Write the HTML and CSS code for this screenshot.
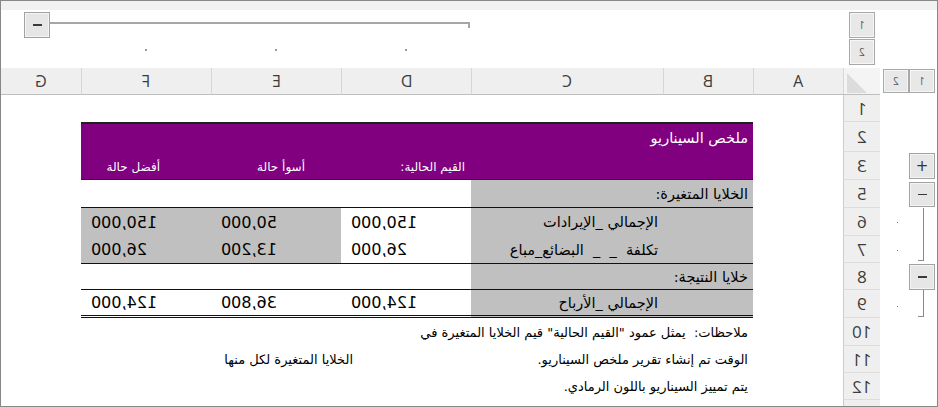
FILE: index.html
```html
<!DOCTYPE html>
<html lang="ar">
<head>
<meta charset="utf-8">
<title>ملخص السيناريو</title>
<link rel="stylesheet" href="styles.css">
</head>
<body>
<div class="frame">
  <div class="sheet">
    <div class="strip"></div>

    <!-- column outline, level A -->
    <div class="ola">
      <div class="obtn"><span class="minus"></span></div>
      <div class="hline"></div>
    </div>
    <div class="span3"></div>
    <div class="rhtop"><div class="lbtn"><span class="m">1</span></div></div>
    <div></div>

    <!-- column outline, level B -->
    <div></div>
    <div class="dotcell"><i class="cdot"></i></div>
    <div class="dotcell"><i class="cdot"></i></div>
    <div class="dotcell"><i class="cdot"></i></div>
    <div class="span3"></div>
    <div class="rhtop"><div class="lbtn l2"><span class="m">2</span></div></div>
    <div></div>

    <!-- column headers -->
    <div class="ch first"><span class="m">G</span></div>
    <div class="ch"><span class="m">F</span></div>
    <div class="ch"><span class="m">E</span></div>
    <div class="ch"><span class="m">D</span></div>
    <div class="ch"><span class="m">C</span></div>
    <div class="ch"><span class="m">B</span></div>
    <div class="ch"><span class="m">A</span></div>
    <div class="corner"><svg width="22" height="22" viewBox="0 0 22 22"><polygon points="2,2 2,22 22,22" fill="#dcdcdc"/></svg></div>
    <div class="rlevels">
      <div class="lbtn rl"><span class="m">2</span></div>
      <div class="lbtn rl"><span class="m">1</span></div>
    </div>

    <!-- row 1 -->
    <div class="span7"></div>
    <div class="rh"><span class="m">1</span></div>
    <div class="ol"></div>

    <!-- row 2 -->
    <div></div>
    <div class="purple top title">ملخص السيناريو</div>
    <div></div>
    <div class="rh"><span class="m">2</span></div>
    <div class="ol"></div>

    <!-- row 3 -->
    <div></div>
    <div class="purple ph ph-f">أفضل حالة</div>
    <div class="purple ph ph-e">أسوأ حالة</div>
    <div class="purple ph ph-d">القيم الحالية:</div>
    <div class="purple ph span2"></div>
    <div></div>
    <div class="rh"><span class="m">3</span></div>
    <div class="ol"><div class="obtn pm">+</div></div>

    <!-- row 5 -->
    <div></div>
    <div class="span3 bb"></div>
    <div class="gray span2 bb lab">الخلايا المتغيرة:</div>
    <div></div>
    <div class="rh"><span class="m">5</span></div>
    <div class="ol"><div class="obtn pm low"><span class="minus"></span></div></div>

    <!-- row 6 -->
    <div></div>
    <div class="gray num"><span class="m">150,000</span></div>
    <div class="gray num"><span class="m">50,000</span></div>
    <div class="num"><span class="m">150,000</span></div>
    <div class="gray lab">الإجمالي _الإيرادات</div>
    <div class="gray"></div>
    <div></div>
    <div class="rh"><span class="m">6</span></div>
    <div class="ol"><i class="rdot"></i><div class="vline"></div></div>

    <!-- row 7 -->
    <div></div>
    <div class="gray num"><span class="m">26,000</span></div>
    <div class="gray num"><span class="m">13,200</span></div>
    <div class="num"><span class="m">26,000</span></div>
    <div class="gray lab">تكلفة &nbsp;_ &nbsp;_ &nbsp;البضائع_مباع</div>
    <div class="gray"></div>
    <div></div>
    <div class="rh"><span class="m">7</span></div>
    <div class="ol"><i class="rdot"></i><div class="vend"></div></div>

    <!-- row 8 -->
    <div></div>
    <div class="span3 bt bb"></div>
    <div class="gray span2 bt bb lab">خلايا النتيجة:</div>
    <div></div>
    <div class="rh"><span class="m">8</span></div>
    <div class="ol"><div class="obtn pm"><span class="minus"></span></div></div>

    <!-- row 9 -->
    <div></div>
    <div class="num dbl"><span class="m">124,000</span></div>
    <div class="num dbl"><span class="m">36,800</span></div>
    <div class="num dbl"><span class="m">124,000</span></div>
    <div class="gray dbl lab">الإجمالي _الأرباح</div>
    <div class="gray dbl"></div>
    <div></div>
    <div class="rh"><span class="m">9</span></div>
    <div class="ol"><i class="rdot d9"></i><div class="vend v9"></div></div>

    <!-- row 10 -->
    <div></div>
    <div class="span5 note">ملاحظات: &nbsp;يمثل عمود "القيم الحالية" قيم الخلايا المتغيرة في</div>
    <div></div>
    <div class="rh"><span class="m">10</span></div>
    <div class="ol"></div>

    <!-- row 11 -->
    <div></div>
    <div class="span3 note note-l">الخلايا المتغيرة لكل منها</div>
    <div class="span2 note">الوقت تم إنشاء تقرير ملخص السيناريو.</div>
    <div></div>
    <div class="rh"><span class="m">11</span></div>
    <div class="ol"></div>

    <!-- row 12 -->
    <div></div>
    <div class="span5 note">يتم تمييز السيناريو باللون الرمادي.</div>
    <div></div>
    <div class="rh"><span class="m">12</span></div>
    <div class="ol"></div>

    <!-- row 13 (partial) -->
    <div class="span7"></div>
    <div class="rh last"></div>
    <div class="ol"></div>
  </div>
</div>
</body>
</html>
```

FILE: styles.css
```css
* { box-sizing: border-box; }
html, body { margin: 0; padding: 0; background: #ffffff; }
body {
  width: 938px;
  height: 407px;
  overflow: hidden;
  font-family: "DejaVu Sans", sans-serif;
  color: #000;
}
.frame {
  width: 938px;
  height: 407px;
  border: 1px solid #878787;
  overflow: hidden;
}
.sheet {
  display: grid;
  grid-template-columns: 80px 130px 130px 130px 192px 90px 90px 37px 57px;
  grid-template-rows: 9px 29px 29px 27px 27px 30px 28px 28px 28px 27px 27px 28px 28px 27px 27px 6px;
}
.m { display: inline-block; transform: scaleX(-1); }

.span2 { grid-column: span 2; }
.span3 { grid-column: span 3; }
.span5 { grid-column: span 5; }
.span7 { grid-column: span 7; }

.strip { grid-column: 1 / -1; background: #f1f1f1; }

/* column outline */
.ola {
  grid-column: span 4;
  display: flex;
  align-items: flex-start;
  padding: 2px 1px 0 23px;
}
.obtn {
  width: 26px;
  height: 26px;
  border: 1px solid #a2a2a2;
  background: #e6e6e6;
  box-shadow: inset 0 0 0 1px #f4f4f4;
  display: flex;
  align-items: center;
  justify-content: center;
  color: #333;
  font-size: 15px;
  line-height: 1;
}
.minus { width: 9px; height: 1.5px; background: #3a3a3a; }
.hline {
  flex: 1;
  margin-top: 10px;
  height: 6px;
  border-top: 2px solid #a6a6a6;
  border-right: 2px solid #a6a6a6;
}
.dotcell { display: flex; justify-content: center; padding-top: 10px; }
.cdot { display: block; width: 2px; height: 2px; background: #9a9a9a; }
.rhtop { padding-left: 6px; }
.lbtn {
  width: 26px;
  height: 26px;
  margin-top: 2px;
  border: 1px solid #a8a8a8;
  background: #e8e8e8;
  box-shadow: inset 0 0 0 1px #f6f6f6;
  display: flex;
  align-items: center;
  justify-content: center;
  font-family: "Open Sans", sans-serif;
  font-size: 10px;
  color: #555;
}
.lbtn.l2 { margin-top: 0; height: 26px; }
.rlevels { display: flex; padding: 1px 0 0 3px; }
.lbtn.rl { width: 26px; height: 24px; margin-top: 0; }

/* column headers */
.ch {
  background: #efefef;
  border-left: 1px solid #d6d6d6;
  border-bottom: 1px solid #bdbdbd;
  display: flex;
  align-items: center;
  justify-content: center;
  font-family: "Open Sans", sans-serif;
  font-size: 16px;
  color: #3c3c3c;
}
.ch.first { border-left: 0; }
.corner {
  background: #f4f4f4;
  border-left: 1px solid #d6d6d6;
  border-bottom: 1px solid #bdbdbd;
  padding: 3px 0 0 1px;
}
.corner svg { display: block; }

/* row headers */
.rh {
  background: #efefef;
  border-left: 1px solid #cccccc;
  border-bottom: 1px solid #dcdcdc;
  display: flex;
  align-items: center;
  justify-content: center;
  font-family: "Open Sans", sans-serif;
  font-size: 17px;
  color: #3c3c3c;
}
.rh.last { border-bottom: 0; }

/* row outline */
.ol {
  display: grid;
  grid-template-columns: 29px 26px;
  align-items: start;
}
.ol .obtn { grid-column: 2; margin-top: 1px; }
.ol .obtn.low { margin-top: 2px; height: 25px; }
.rdot { grid-column: 1; display: block; width: 1px; height: 1px; margin: 14px 0 0 17px; background: #777; }
.rdot.d9 { margin-top: 16px; }
.vline {
  grid-column: 2;
  align-self: stretch;
  margin-left: 9px;
  width: 6px;
  border-right: 1px solid #8a8a8a;
}
.vend {
  grid-column: 2;
  margin-left: 9px;
  width: 6px;
  height: 25px;
  border-right: 1px solid #8a8a8a;
  border-bottom: 1px solid #8a8a8a;
}
.vend.v9 { height: 27px; }

/* sheet content */
.purple { background: #800080; color: #ffffff; }
.top { border-top: 2px solid #202020; }
.title {
  grid-column: span 5;
  direction: rtl;
  display: flex;
  align-items: center;
  padding: 0 5px 0 0;
  font-size: 14.5px;
}
.ph {
  direction: rtl;
  display: flex;
  align-items: flex-end;
  padding-bottom: 5px;
  font-size: 12px;
  border-bottom: 1px solid #4a004a;
}
.ph-f { padding-right: 51px; }
.ph-e { padding-right: 36px; }
.ph-d { padding-right: 6px; }
.gray { background: #c0c0c0; }
.bb { border-bottom: 1px solid #111; }
.bt { border-top: 1px solid #111; }
.dbl { border-bottom: 3px double #111; }
.lab {
  direction: rtl;
  display: flex;
  align-items: center;
  padding-right: 5px;
  font-size: 14.5px;
}
.num {
  display: flex;
  align-items: center;
  padding-left: 10px;
  font-size: 16px;
}
.note {
  direction: rtl;
  display: flex;
  align-items: center;
  padding-right: 5px;
  font-size: 13px;
}
.note-l { padding-right: 118px; }
```
